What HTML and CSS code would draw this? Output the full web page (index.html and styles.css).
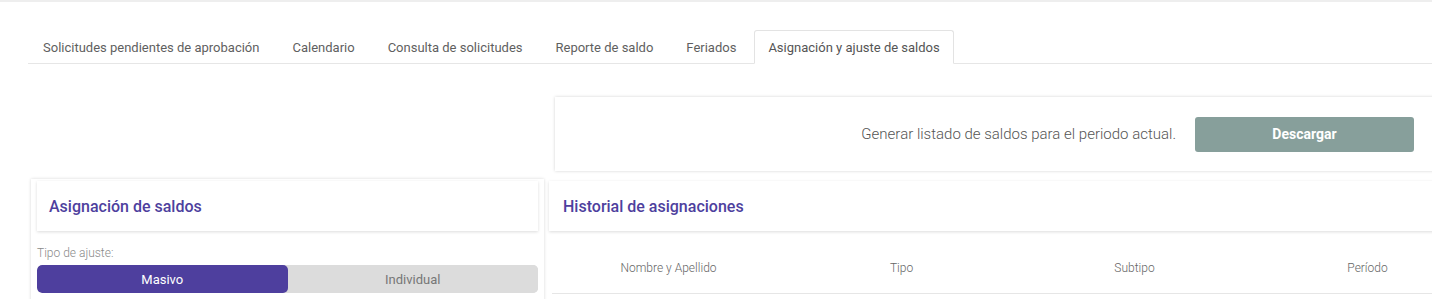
FILE: index.html
```html
<!DOCTYPE html>
<html lang="es">
<head>
  <meta charset="UTF-8" />
  <title>Asignación y ajuste de saldos</title>
  <link rel="stylesheet" href="styles.css">
</head>
<body>
  <div class="topline"></div>

  <!-- Tabs -->
  <nav class="tabs">
    <a class="tab">Solicitudes pendientes de aprobación</a>
    <a class="tab">Calendario</a>
    <a class="tab">Consulta de solicitudes</a>
    <a class="tab">Reporte de saldo</a>
    <a class="tab">Feriados</a>
    <a class="tab active">Asignación y ajuste de saldos</a>
  </nav>

  <main class="layout">
    <div class="spacer"></div>

    <section class="download-card">
      <span class="download-text">Generar listado de saldos para el periodo actual.</span>
      <button class="btn-download" type="button">Descargar</button>
    </section>

    <!-- Left: asignacion -->
    <section class="assign-card">
      <div class="panel-header">
        <h2>Asignación de saldos</h2>
      </div>
      <div class="assign-body">
        <label class="field-label">Tipo de ajuste:</label>
        <div class="toggle">
          <button class="toggle-btn selected" type="button">Masivo</button>
          <button class="toggle-btn" type="button">Individual</button>
        </div>
      </div>
    </section>

    <!-- Right: historial -->
    <section class="history">
      <div class="panel-header">
        <h2>Historial de asignaciones</h2>
      </div>
      <table class="history-table">
        <thead>
          <tr>
            <th>Nombre y Apellido</th>
            <th>Tipo</th>
            <th>Subtipo</th>
            <th>Período</th>
          </tr>
        </thead>
      </table>
    </section>
  </main>
</body>
</html>
```

FILE: styles.css
```css
body {
  margin: 0;
  background: #fff;
  font-family: Roboto, "Liberation Sans", sans-serif;
  color: #555;
  overflow: hidden;
}

.topline {
  height: 2px;
  background: #eeeeee;
}

/* Tabs */
.tabs {
  display: flex;
  margin: 28px 0 0 28px;
  border-bottom: 1px solid #e6e6e6;
}

.tab {
  padding: 9px 14px 8px 14px;
  margin-right: 3px;
  margin-bottom: -1px;
  border: 1px solid transparent;
  border-radius: 3px 3px 0 0;
  font-size: 13px;
  line-height: 15px;
  color: #5f5f5f;
  white-space: nowrap;
}

.tab.active {
  padding: 9px 13px 8px 13px;
  border-color: #e3e3e3;
  border-bottom-color: #fff;
  background: #fff;
  color: #555;
}

/* Main layout */
.layout {
  display: grid;
  grid-template-columns: 513px 960px;
  column-gap: 5px;
  row-gap: 8px;
  padding: 33px 0 0 31px;
}

.download-card {
  margin-left: 6px;
  height: 74px;
  display: flex;
  align-items: center;
  justify-content: flex-end;
  padding-right: 95px;
  background: #fff;
  box-shadow: 0 0 3px rgba(0, 0, 0, 0.18);
}

.download-text {
  font-size: 15px;
  font-weight: 300;
  color: #555;
  margin-right: 19px;
}

.btn-download {
  width: 219px;
  height: 35px;
  border: none;
  border-radius: 3px;
  background: #879f9b;
  color: #fff;
  font-family: Roboto, "Liberation Sans", sans-serif;
  font-size: 14px;
  font-weight: 700;
}

/* Cards */
.assign-card {
  height: 140px;
  padding: 2px 6px 0 6px;
  background: #fff;
  box-shadow: 0 0 3px rgba(0, 0, 0, 0.16);
}

.panel-header {
  height: 50px;
  display: flex;
  align-items: center;
  padding-left: 12px;
  background: #fff;
  box-shadow: 0 1px 3px rgba(0, 0, 0, 0.14);
}

.panel-header h2 {
  margin: 0;
  font-size: 16px;
  font-weight: 500;
  color: #4e3f9e;
}

.assign-body {
  padding-top: 15px;
}

.field-label {
  display: block;
  font-size: 12px;
  font-weight: 300;
  color: #8a8a8a;
  margin-bottom: 5px;
}

.toggle {
  display: flex;
  height: 28px;
  border-radius: 5px;
  overflow: hidden;
  background: #dcdcdc;
}

.toggle-btn {
  flex: 1;
  border: none;
  background: #dcdcdc;
  color: #777;
  font-family: Roboto, "Liberation Sans", sans-serif;
  font-size: 13px;
}

.toggle-btn.selected {
  background: #4e3f9e;
  color: #fff;
  border-radius: 5px;
}

/* History */
.history {
  padding-top: 2px;
}

.history .panel-header {
  padding-left: 14px;
}

.history-table {
  margin-left: 3px;
  border-collapse: collapse;
  width: 932px;
  table-layout: fixed;
}

.history-table th {
  padding: 30px 0 18px;
  font-size: 12px;
  line-height: 14px;
  font-weight: 300;
  color: #666;
  text-align: center;
  border-bottom: 1px solid #e6e6e6;
}
```
